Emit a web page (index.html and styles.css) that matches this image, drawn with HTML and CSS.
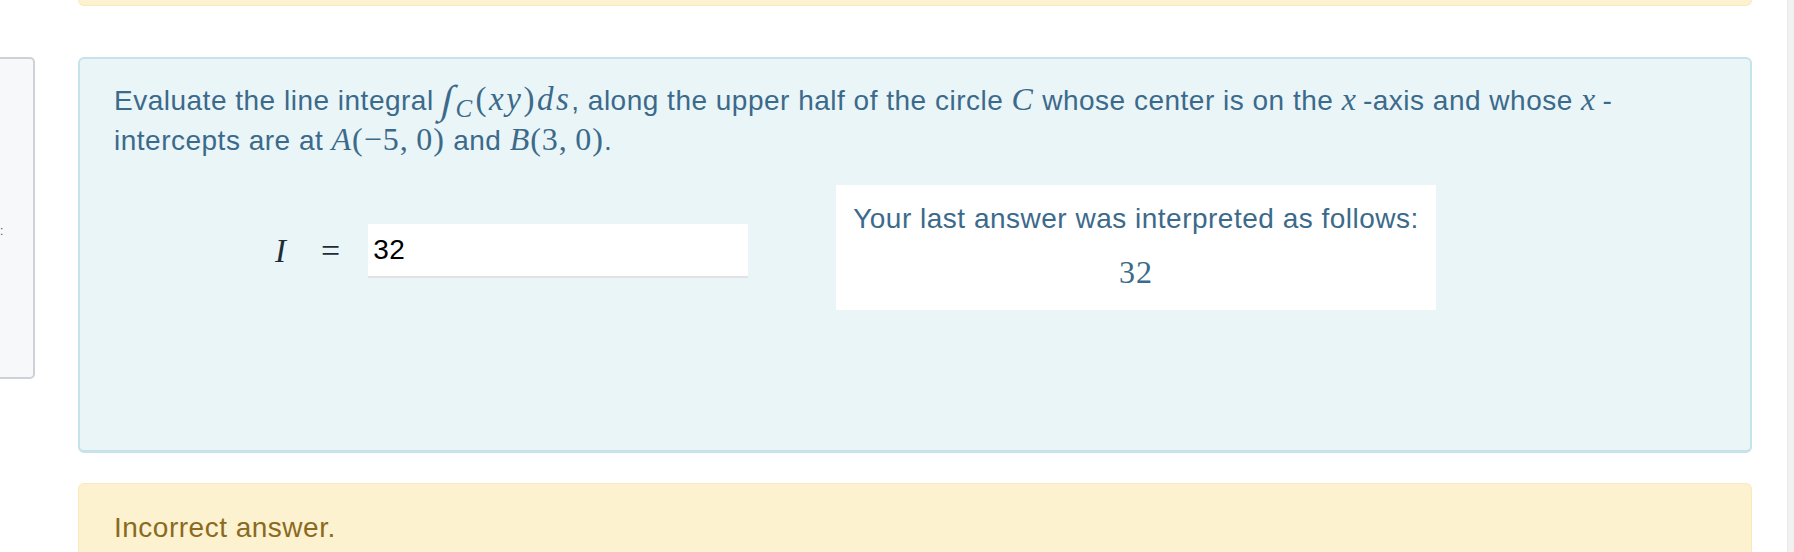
FILE: index.html
```html
<!DOCTYPE html>
<html lang="en">
<head>
<meta charset="utf-8">
<title>Question</title>
<link rel="stylesheet" href="styles.css">
</head>
<body>
<div class="page">
  <div class="side">
    <aside class="info"><span class="info-colon">:</span></aside>
  </div>
  <div class="main">
    <div class="outcome-top"></div>
    <div class="formulation">
      <p class="qtext">Evaluate the line integral <span class="math math-int"><span class="int">∫</span><span class="sub">C</span>(<i>x</i><i>y</i>)<i>d</i><i>s</i></span>, along the upper half of the circle <span class="math"><i>C</i></span> whose center is on the <span class="math"><i>x</i></span>&#8201;-axis and whose <span class="math"><i>x</i></span>&#8201;-<br>intercepts are at <span class="math"><i>A</i>(−5,&#8201;0)</span> and <span class="math"><i>B</i>(3,&#8201;0)</span>.</p>
      <div class="answer-row">
        <div class="input-group">
          <span class="mvar">I</span>
          <span class="meq">=</span>
          <input class="answer" type="text" value="32">
        </div>
        <div class="feedback">
          <p class="feedback-text">Your last answer was interpreted as follows:</p>
          <div class="feedback-math">32</div>
        </div>
      </div>
    </div>
    <div class="outcome">Incorrect answer.</div>
  </div>
  <div class="scrollbar"></div>
</div>
</body>
</html>
```
FILE: styles.css
```css
html, body {
  margin: 0;
  padding: 0;
  background: #ffffff;
}

body {
  font-family: "Liberation Sans", Arial, sans-serif;
  font-size: 28px;
  line-height: 40px;
  letter-spacing: 0.5px;
}

.page {
  display: flex;
  height: 552px;
  overflow: hidden;
}

.side {
  width: 35px;
  flex: none;
  padding-top: 57px;
}

.info {
  box-sizing: border-box;
  height: 322px;
  background: #f7f8fa;
  border: 2px solid #cdd2d7;
  border-left: none;
  border-radius: 0 5px 5px 0;
  padding-top: 166px;
  font-size: 12px;
  line-height: 12px;
  color: #555;
  overflow: hidden;
}

.info-colon {
  display: block;
  margin-left: 0;
}

.main {
  flex: 1;
  margin-left: 43px;
  margin-right: 35px;
  display: flex;
  flex-direction: column;
}

.scrollbar {
  width: 6px;
  flex: none;
  background: #f1f1f1;
  border-left: 1px solid #e9e9e9;
}

.outcome-top {
  box-sizing: border-box;
  height: 6px;
  background: #fcf2d0;
  border: 1px solid #fae9bd;
  border-top: none;
  border-radius: 0 0 6px 6px;
}

.formulation {
  box-sizing: border-box;
  margin-top: 51px;
  height: 396px;
  background: #eaf5f8;
  border: 2px solid #c6e3ea;
  border-bottom-width: 3px;
  border-radius: 6px;
  padding: 22px 34px 0;
  color: #3b6a8b;
}

.qtext {
  margin: 0;
}

.math {
  font-family: "Liberation Serif", "Times New Roman", serif;
  font-size: 32px;
  line-height: 1;
  letter-spacing: 1px;
}

.math-int {
  font-size: 33px;
  letter-spacing: 2.5px;
}

.math i {
  font-style: italic;
}

.int {
  display: inline-block;
  font-size: 40px;
  line-height: 0;
  font-style: italic;
  vertical-align: -3px;
  margin-right: 0;
  transform: skewX(-12deg);
}

.sub {
  font-style: italic;
  font-size: 25px;
  line-height: 0;
  vertical-align: -7px;
  margin-right: 1px;
}

.answer-row {
  display: flex;
  align-items: flex-start;
  margin-top: 24px;
}

.input-group {
  display: flex;
  align-items: center;
  margin-left: 161px;
  margin-top: 39px;
  height: 54px;
  color: #1c2d38;
  letter-spacing: 0;
}

.mvar {
  font-family: "Liberation Serif", "Times New Roman", serif;
  font-style: italic;
  font-size: 33px;
  width: 46px;
}

.meq {
  font-family: "Liberation Serif", "Times New Roman", serif;
  font-size: 34px;
  margin-right: 28px;
}

.answer {
  box-sizing: border-box;
  width: 380px;
  height: 54px;
  border: none;
  border-bottom: 2px solid #dfe3e6;
  background: #ffffff;
  padding: 0 0 0 5px;
  margin: 0;
  font-family: "Liberation Sans", Arial, sans-serif;
  font-size: 28px;
  letter-spacing: 0.4px;
  color: #000000;
  outline: none;
}

.feedback {
  margin-left: 88px;
  background: #ffffff;
  padding: 14px 17px 18px;
  text-align: center;
}

.feedback-text {
  margin: 0 0 13px;
}

.feedback-math {
  font-family: "Liberation Serif", "Times New Roman", serif;
  font-size: 32px;
  line-height: 40px;
  letter-spacing: 1px;
}

.outcome {
  margin-top: 30px;
  flex: 1;
  background: #fcf2d0;
  border: 1px solid #fae9bd;
  border-bottom: none;
  border-radius: 6px 6px 0 0;
  padding: 24px 35px 0;
  color: #8a6a1f;
}
```
